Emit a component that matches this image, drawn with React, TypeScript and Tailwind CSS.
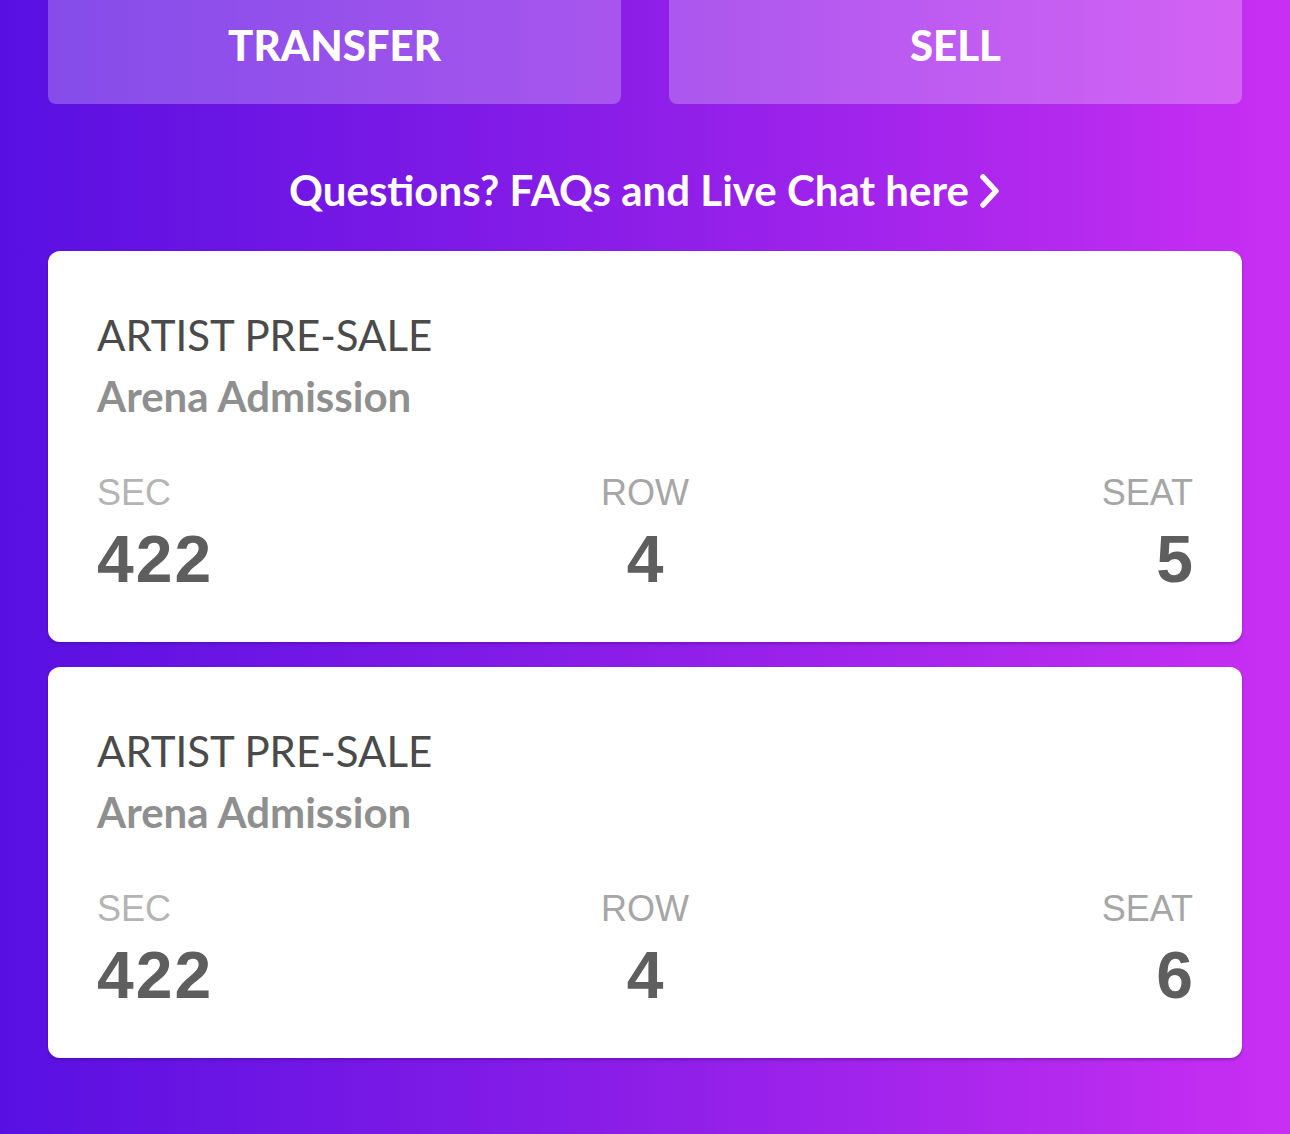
import React from 'react'

const tickets = [
  { sec: '422', row: '4', seat: '5' },
  { sec: '422', row: '4', seat: '6' },
]

function TicketCard({ sec, row, seat }: { sec: string; row: string; seat: string }) {
  return (
    <div className="rounded-[12px] bg-white px-[49px] pt-[54px] pb-[50px] shadow-[0_2px_3px_rgba(60,0,120,0.35)]">
      <div className="font-['Lato'] text-[42px] leading-[61px] text-[#4a4a4a]">ARTIST PRE-SALE</div>
      <div className="font-['Lato'] text-[42px] font-bold leading-[61px] text-[#8f8f8f]">
        Arena Admission
      </div>

      <div className="mt-[33px] grid grid-cols-3 font-['Liberation_Sans',Arial,sans-serif]">
        <div className="text-left">
          <div className="text-[36px] leading-[66px] text-[#b4b4b4]">SEC</div>
          <div className="text-[66px] font-bold leading-[66px] tracking-[2px] text-[#5e5e5e]">{sec}</div>
        </div>
        <div className="text-center">
          <div className="text-[36px] leading-[66px] text-[#a6a6a6]">ROW</div>
          <div className="text-[66px] font-bold leading-[66px] text-[#5e5e5e]">{row}</div>
        </div>
        <div className="text-right">
          <div className="text-[36px] leading-[66px] text-[#a6a6a6]">SEAT</div>
          <div className="text-[66px] font-bold leading-[66px] text-[#5e5e5e]">{seat}</div>
        </div>
      </div>
    </div>
  )
}

export default function App() {
  return (
    <div className="h-[1134px] w-[1290px] overflow-hidden bg-[linear-gradient(90deg,#5810e2_0%,#8d1ee8_50%,#c92ff2_100%)] px-[48px]">
      <div className="grid grid-cols-2 gap-[48px]">
        <button className="flex h-[104px] items-center justify-center rounded-b-[8px] bg-white/25 pb-[14px] font-['Lato'] text-[42px] font-black text-white">
          TRANSFER
        </button>
        <button className="flex h-[104px] items-center justify-center rounded-b-[8px] bg-white/25 pb-[14px] font-['Lato'] text-[42px] font-black text-white">
          SELL
        </button>
      </div>

      <div className="flex h-[147px] items-center justify-center gap-[10px] pt-[26px] font-['Lato'] text-[42px] font-bold text-white">
        <span>Questions? FAQs and Live Chat here</span>
        <svg width="22" height="34" viewBox="0 0 22 34" fill="none">
          <path d="M4 3 L17 17 L4 31" stroke="white" strokeWidth="5.5" strokeLinecap="round" strokeLinejoin="round" />
        </svg>
      </div>

      <div className="flex flex-col gap-[25px]">
        {tickets.map((t, i) => (
          <TicketCard key={i} {...t} />
        ))}
      </div>
    </div>
  )
}
